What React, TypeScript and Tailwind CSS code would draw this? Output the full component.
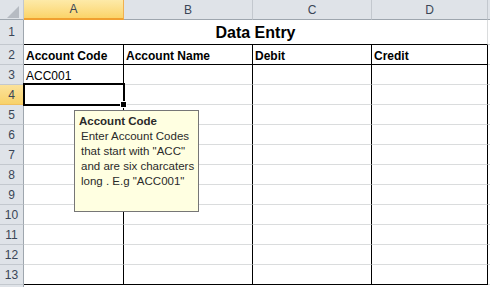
import React from "react";

const rows = [2, 3, 4, 5, 6, 7, 8, 9, 10, 11, 12, 13];

const dataCols = [
    { key: "A", w: "w-[100px]" },
    { key: "B", w: "w-[129px]" },
    { key: "C", w: "w-[119px]" },
    { key: "D", w: "w-[116px]" },
];

const headerLabels: Record<string, string> = {
    A: "Account Code",
    B: "Account Name",
    C: "Debit",
    D: "Credit",
};

function RowHeader({ n, active }: { n?: number; active?: boolean }) {
    return (
        <div
            className={
                active
                    ? "w-[24px] shrink-0 flex items-center justify-center border-r border-b border-r-[#f0a030] border-b-[#f0c060] bg-gradient-to-b from-[#fbe29a] to-[#f8d26a] text-[12px] text-[#3a4656]"
                    : "w-[24px] shrink-0 flex items-center justify-center border-r border-b border-r-[#9ea6ae] border-b-[#c3c8ce] bg-[#dfe3e8] text-[12px] text-[#3a4656]"
            }
        >
            {n}
        </div>
    );
}

export default function App() {
    return (
        <div className="relative w-[490px] h-[287px] overflow-hidden bg-white font-['Liberation_Sans',Arial,sans-serif] text-black">
            {/* column headers */}
            <div className="flex h-[20px]">
                <div className="relative w-[24px] shrink-0 bg-[#dfe3e8] border-r border-b border-r-[#c3c8ce] border-b-[#9ea6ae]">
                    <svg className="absolute left-[7px] top-[6px]" width="12" height="12" viewBox="0 0 12 12">
                        <polygon points="12,0 12,12 0,12" fill="#b6bbc2" />
                    </svg>
                </div>
                {dataCols.map((c) => (
                    <div
                        key={c.key}
                        className={
                            c.key === "A"
                                ? `${c.w} shrink-0 flex items-center justify-center border-r border-b-2 border-r-[#f0b050] border-b-[#f0a030] bg-gradient-to-b from-[#fdeaa8] to-[#fbd468] text-[12px] text-[#3a4656]`
                                : `${c.w} shrink-0 flex items-center justify-center border-r border-b border-r-[#c3c8ce] border-b-[#9ea6ae] bg-[#dfe3e8] text-[12px] text-[#3a4656]`
                        }
                    >
                        {c.key}
                    </div>
                ))}
                <div className="flex-1 bg-[#dfe3e8] border-b border-[#9ea6ae]" />
            </div>

            {/* row 1: merged title */}
            <div className="flex h-[25px]">
                <RowHeader n={1} />
                <div className="w-[464px] shrink-0 flex items-end justify-center pb-[3px] border-b border-r border-b-black border-r-[#dadcdd] text-[16px] font-bold leading-none">
                    Data Entry
                </div>
                <div className="flex-1 border-b border-[#dadcdd]" />
            </div>

            {rows.map((r) => (
                <div key={r} className="flex h-[20px]">
                    <RowHeader n={r} active={r === 4} />
                    {dataCols.map((c) => (
                        <div
                            key={c.key}
                            className={`${c.w} shrink-0 flex items-end px-[2px] pb-[2px] border-r border-b border-r-black text-[12px] leading-none whitespace-nowrap ${
                                r === 2 || r === 13 ? "border-b-black" : "border-b-[#dadcdd]"
                            } ${r === 2 ? "font-bold text-[12.5px]" : ""}`}
                        >
                            {r === 2 ? headerLabels[c.key] : r === 3 && c.key === "A" ? "ACC001" : ""}
                        </div>
                    ))}
                    <div className="flex-1 border-b border-[#dadcdd]" />
                </div>
            ))}

            <div className="flex h-[20px]">
                <RowHeader />
            </div>

            {/* selected cell A4 */}
            <div className="absolute left-[23px] top-[83px] w-[102px] h-[23px] border-2 border-black" />
            <div className="absolute left-[120px] top-[101px] w-[7px] h-[7px] bg-black border border-white" />

            {/* input message */}
            <div className="absolute left-[74px] top-[110px] w-[125px] h-[102px] bg-[#ffffe1] border border-[#767676] pl-[4px] pt-[3px] text-[11.5px] leading-[15px] text-[#2a2a2a] whitespace-nowrap">
                <div className="font-bold">Account Code</div>
                <div className="pl-[2px]">
                    <div>Enter Account Codes</div>
                    <div>that start with "ACC"</div>
                    <div>and are six charcaters</div>
                    <div>long . E.g "ACC001"</div>
                </div>
            </div>
        </div>
    );
}
